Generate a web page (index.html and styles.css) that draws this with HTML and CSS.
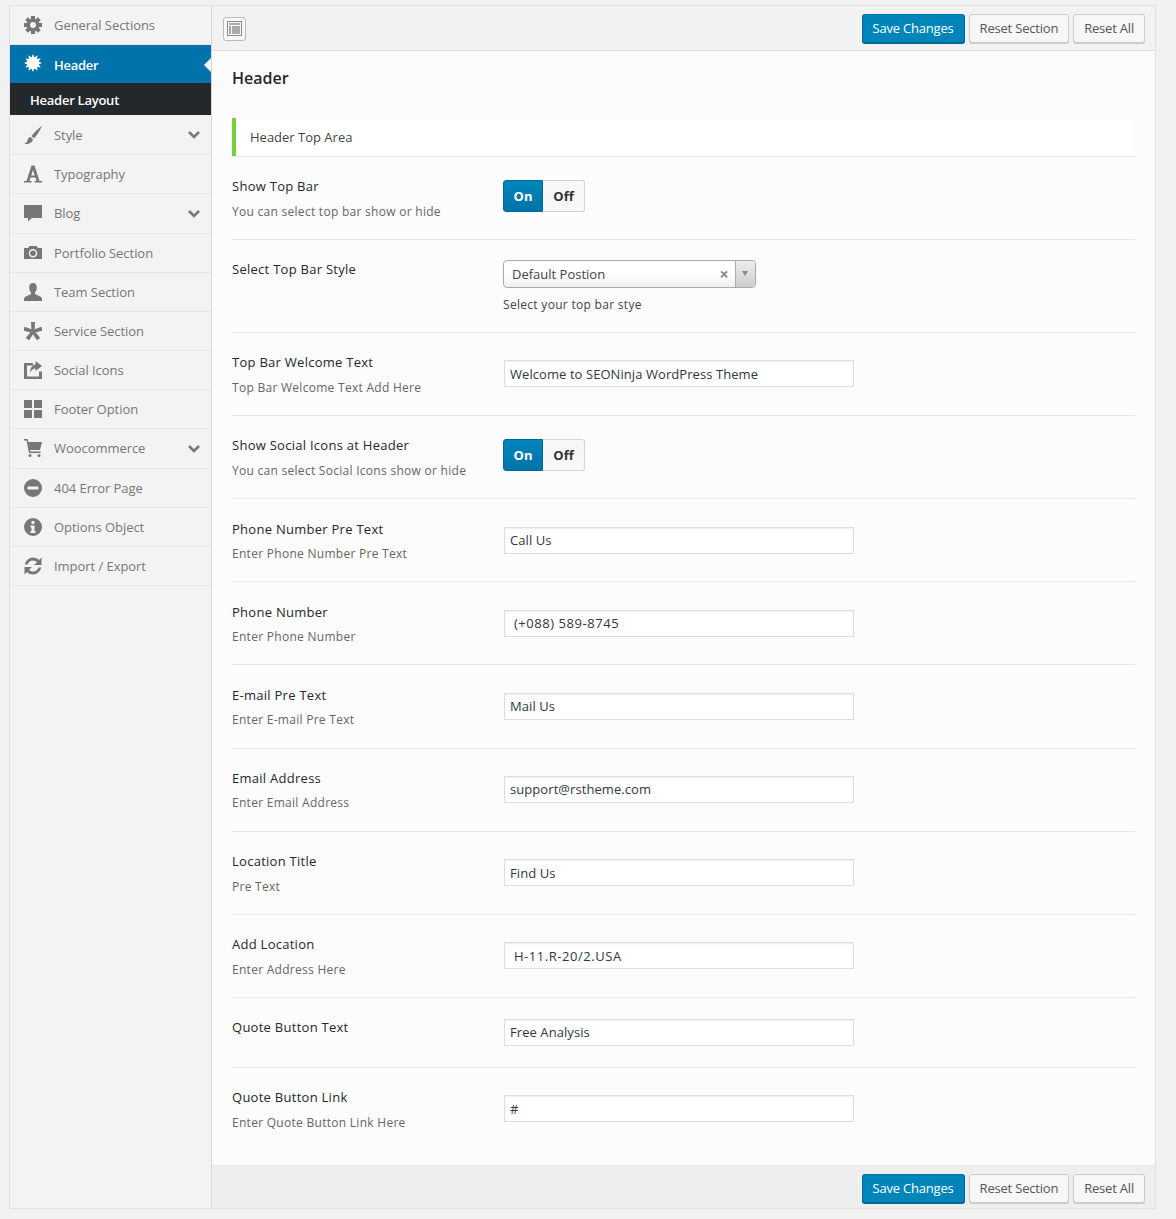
FILE: index.html
```html
<!DOCTYPE html>
<html lang="en">
<head>
  <meta charset="UTF-8">
  <title>Theme Options - Header</title>
  <link rel="stylesheet" href="styles.css">
</head>
<body>

  <div class="panel">
    <div class="sidebar">
      <a class="nav-item">
        <svg class="nav-icon" viewBox="0 0 18 18"><circle cx="9" cy="9" r="4.8" fill="none" stroke="currentColor" stroke-width="3.6"/><g fill="currentColor"><rect x="7" y="0" width="4" height="18"/><rect x="7" y="0" width="4" height="18" transform="rotate(45 9 9)"/><rect x="7" y="0" width="4" height="18" transform="rotate(90 9 9)"/><rect x="7" y="0" width="4" height="18" transform="rotate(135 9 9)"/></g><circle cx="9" cy="9" r="3" fill="#f3f3f3"/></svg>
        General Sections
      </a>
      <a class="nav-item active">
        <svg class="nav-icon" viewBox="0 0 18 18"><path fill="currentColor" d="M18 9L14.600 7.500L16.800 4.500L13.100 4.900L13.500 1.200L10.500 3.400L9 0L7.500 3.400L4.500 1.200L4.900 4.900L1.200 4.500L3.400 7.500L0 9L3.400 10.500L1.200 13.500L4.900 13.100L4.500 16.800L7.500 14.600L9 18L10.500 14.600L13.500 16.800L13.100 13.100L16.800 13.500L14.600 10.500Z"/></svg>
        Header
      </a>
      <a class="nav-sub">Header Layout</a>
      <a class="nav-item">
        <svg class="nav-icon" viewBox="0 0 18 18"><path fill="currentColor" d="M18 0C14 3 10 6.500 7.500 10L10 12.500C13 9.500 16 4 18 0ZM6.500 11C3.500 11.500 4 14 3 15.500C2.500 16.500 1.500 17.500 0 18C4 18.500 8.500 17 9 13.500Z"/></svg>
        Style
        <svg class="chevron" viewBox="0 0 12 8"><path d="M1 1l5 5 5-5" fill="none" stroke="currentColor" stroke-width="2.600"/></svg>
      </a>
      <a class="nav-item">
        <svg class="nav-icon" viewBox="0 0 18 18"><path fill="currentColor" fill-rule="evenodd" d="M7.500 0.500H10.500L15.500 16H18V17.500H10.500V16H12.500L11.500 12.500H6.500L5.500 16H7.500V17.500H0V16H2.500ZM9 5L7.200 10.500H10.800Z"/></svg>
        Typography
      </a>
      <a class="nav-item">
        <svg class="nav-icon" viewBox="0 0 18 18"><path fill="currentColor" d="M0 1H18V14H8L4 17.500V14H0Z"/></svg>
        Blog
        <svg class="chevron" viewBox="0 0 12 8"><path d="M1 1l5 5 5-5" fill="none" stroke="currentColor" stroke-width="2.600"/></svg>
      </a>
      <a class="nav-item">
        <svg class="nav-icon" viewBox="0 0 18 18"><path fill="currentColor" fill-rule="evenodd" d="M0 4H4L5.500 2H12.500L14 4H18V15H0ZM9 5A4.300 4.300 0 1 0 9 13.600A4.300 4.300 0 1 0 9 5Z"/><circle cx="9" cy="9.300" r="2.800" fill="currentColor"/></svg>
        Portfolio Section
      </a>
      <a class="nav-item">
        <svg class="nav-icon" viewBox="0 0 18 18"><path fill="currentColor" d="M9 0C11.500 0 12.800 2 12.800 4.500C12.800 7 11.800 8.500 11 9.500V11C13 12.500 18 13 18 16V18H0V16C0 13 5 12.500 7 11V9.500C6.200 8.500 5.200 7 5.200 4.500C5.200 2 6.500 0 9 0Z"/></svg>
        Team Section
      </a>
      <a class="nav-item">
        <svg class="nav-icon" viewBox="0 0 18 18"><g fill="currentColor"><path d="M7 0H11L10.500 9.500H7.500Z"/><path d="M7 0H11L10.500 9.500H7.500Z" transform="rotate(72 9 9.500)"/><path d="M7 0H11L10.500 9.500H7.500Z" transform="rotate(144 9 9.500)"/><path d="M7 0H11L10.500 9.500H7.500Z" transform="rotate(216 9 9.500)"/><path d="M7 0H11L10.500 9.500H7.500Z" transform="rotate(288 9 9.500)"/></g></svg>
        Service Section
      </a>
      <a class="nav-item">
        <svg class="nav-icon" viewBox="0 0 18 18"><path fill="currentColor" d="M0 2H9V4.500H3V15.500H15V10.500H18V18H0ZM11.500 0L18 5L11.500 10V7.500C9 7.500 7 9 6 12C6 7.500 8 4 11.500 3.500Z"/></svg>
        Social Icons
      </a>
      <a class="nav-item">
        <svg class="nav-icon" viewBox="0 0 18 18"><path fill="currentColor" d="M0 0H8V8H0ZM10 0H18V8H10ZM0 10H8V18H0ZM10 10H18V18H10Z"/></svg>
        Footer Option
      </a>
      <a class="nav-item">
        <svg class="nav-icon" viewBox="0 0 18 18"><path fill="currentColor" d="M0 0H3.500L4.500 3H18L16 11H6L6.500 12.500H16.500V14H5L2.500 1.500H0Z"/><circle cx="6" cy="16.500" r="1.500" fill="currentColor"/><circle cx="15" cy="16.500" r="1.500" fill="currentColor"/></svg>
        Woocommerce
        <svg class="chevron" viewBox="0 0 12 8"><path d="M1 1l5 5 5-5" fill="none" stroke="currentColor" stroke-width="2.600"/></svg>
      </a>
      <a class="nav-item">
        <svg class="nav-icon" viewBox="0 0 18 18"><path fill="currentColor" fill-rule="evenodd" d="M9 0A9 9 0 1 0 9 18A9 9 0 1 0 9 0ZM3.500 7.500H14.500V10.500H3.500Z"/></svg>
        404 Error Page
      </a>
      <a class="nav-item">
        <svg class="nav-icon" viewBox="0 0 18 18"><path fill="currentColor" fill-rule="evenodd" d="M9 0A9 9 0 1 0 9 18A9 9 0 1 0 9 0ZM7.500 3H10.500V6H7.500ZM6.500 7.500H10.500V13H11.500V15H6.500V13H7.500V9.500H6.500Z"/></svg>
        Options Object
      </a>
      <a class="nav-item">
        <svg class="nav-icon" viewBox="0 0 18 18"><path fill="currentColor" d="M9 0.500C11.500 0.500 13.500 1.500 15 3L17.500 0.500V8H10L13 5.200C12 4.200 10.500 3.400 9 3.400C6.500 3.400 4.500 5 3.500 7.500H0.800C1.800 3.500 5 0.500 9 0.500ZM0.500 10H8L5 12.800C6 13.800 7.500 14.600 9 14.600C11.500 14.600 13.500 13 14.500 10.500H17.200C16.200 14.500 13 17.500 9 17.500C6.500 17.500 4.500 16.500 3 15L0.500 17.500Z"/></svg>
        Import / Export
      </a>
    </div>

    <div class="main">
      <div class="bar bar-top">
        <span class="expand-btn">
          <svg viewBox="0 0 15 15" width="15" height="15"><rect x="0.500" y="0.500" width="14" height="14" fill="none" stroke="#8a8a8a"/><rect x="2" y="2" width="11" height="2" fill="#aaa"/><rect x="2" y="5" width="2" height="8" fill="#aaa"/><rect x="5" y="5" width="8" height="8" fill="#aaa"/></svg>
        </span>
        <div class="bar-actions">
          <button class="btn btn-primary">Save Changes</button>
          <button class="btn">Reset Section</button>
          <button class="btn">Reset All</button>
        </div>
      </div>

      <div class="content">
        <h2 class="page-title">Header</h2>
        <div class="section-head">Header Top Area</div>

        <div class="row">
          <div class="row-label"><div class="label">Show Top Bar</div><div class="desc">You can select top bar show or hide</div></div>
          <div class="cell-switch"><div class="switch"><span class="switch-on">On</span><span class="switch-off">Off</span></div></div>
        </div>

        <div class="row">
          <div class="row-label"><div class="label">Select Top Bar Style</div></div>
          <div class="cell-select">
            <div class="select">
              <span class="select-text">Default Postion</span>
              <span class="select-clear">×</span>
              <span class="select-arrow"></span>
            </div>
            <div class="select-note">Select your top bar stye</div>
          </div>
        </div>

        <div class="row">
          <div class="row-label"><div class="label">Top Bar Welcome Text</div><div class="desc">Top Bar Welcome Text Add Here</div></div>
          <div class="cell-input"><input class="text-input" value="Welcome to SEONinja WordPress Theme"></div>
        </div>

        <div class="row">
          <div class="row-label"><div class="label">Show Social Icons at Header</div><div class="desc">You can select Social Icons show or hide</div></div>
          <div class="cell-switch"><div class="switch"><span class="switch-on">On</span><span class="switch-off">Off</span></div></div>
        </div>

        <div class="row">
          <div class="row-label"><div class="label">Phone Number Pre Text</div><div class="desc">Enter Phone Number Pre Text</div></div>
          <div class="cell-input"><input class="text-input" value="Call Us"></div>
        </div>

        <div class="row">
          <div class="row-label"><div class="label">Phone Number</div><div class="desc">Enter Phone Number</div></div>
          <div class="cell-input"><input class="text-input input-num" value=" (+088) 589-8745"></div>
        </div>

        <div class="row">
          <div class="row-label"><div class="label">E-mail Pre Text</div><div class="desc">Enter E-mail Pre Text</div></div>
          <div class="cell-input"><input class="text-input" value="Mail Us"></div>
        </div>

        <div class="row">
          <div class="row-label"><div class="label">Email Address</div><div class="desc">Enter Email Address</div></div>
          <div class="cell-input"><input class="text-input" value="support@rstheme.com"></div>
        </div>

        <div class="row">
          <div class="row-label"><div class="label">Location Title</div><div class="desc">Pre Text</div></div>
          <div class="cell-input"><input class="text-input" value="Find Us"></div>
        </div>

        <div class="row">
          <div class="row-label"><div class="label">Add Location</div><div class="desc">Enter Address Here</div></div>
          <div class="cell-input"><input class="text-input input-num" value=" H-11.R-20/2.USA"></div>
        </div>

        <div class="row row-short">
          <div class="row-label"><div class="label">Quote Button Text</div></div>
          <div class="cell-input"><input class="text-input" value="Free Analysis"></div>
        </div>

        <div class="row row-last">
          <div class="row-label"><div class="label">Quote Button Link</div><div class="desc">Enter Quote Button Link Here</div></div>
          <div class="cell-input"><input class="text-input" value="#"></div>
        </div>
      </div>

      <div class="bar bar-bottom">
        <div class="bar-actions">
          <button class="btn btn-primary">Save Changes</button>
          <button class="btn">Reset Section</button>
          <button class="btn">Reset All</button>
        </div>
      </div>
    </div>
  </div>

</body>
</html>
```

FILE: styles.css
```css
body {
  margin: 0;
  background: #f1f1f1;
  font-family: "Open Sans", sans-serif;
  font-size: 13px;
  color: #444;
}
.panel {
  display: flex;
  width: 1147px;
  height: 1204px;
  box-sizing: border-box;
  margin: 5px 0 0 9px;
  border: 1px solid #e1e1e1;
  background: #f3f3f3;
}
.sidebar {
  width: 202px;
  flex: none;
  box-sizing: border-box;
  border-right: 1px solid #d8d8d8;
}
.nav-item {
  position: relative;
  display: flex;
  align-items: center;
  gap: 12px;
  height: 39.18px;
  box-sizing: border-box;
  padding-left: 14px;
  border-bottom: 1px solid #e7e7e7;
  color: #777;
  letter-spacing: -0.05px;
}
.nav-icon {
  width: 18px;
  height: 18px;
  flex: none;
}
.nav-item .chevron {
  position: absolute;
  left: 178px;
  top: 16px;
  width: 12px;
  height: 8px;
}
.nav-item.active {
  height: 38px;
  padding-top: 2px;
  background: #0073aa;
  border-bottom: none;
  color: #fff;
  font-weight: 600;
  letter-spacing: -0.3px;
}
.nav-item.active .nav-icon {
  margin-top: -4px;
}
.nav-item.active::after {
  content: "";
  position: absolute;
  right: 0;
  top: 13px;
  border: 7px solid transparent;
  border-left: none;
  border-right-color: #fcfcfc;
}
.nav-sub {
  display: block;
  height: 32px;
  padding-left: 20px;
  background: #23282d;
  color: #fff;
  font-weight: 600;
  line-height: 34px;
  letter-spacing: -0.25px;
}
.nav-sub + .nav-item {
  height: 40px;
}
.main {
  flex: 1;
  display: flex;
  flex-direction: column;
  background: #fcfcfc;
}
.bar {
  display: flex;
  justify-content: space-between;
  flex: none;
  box-sizing: border-box;
  padding: 0 10px 0 11px;
}
.bar-top {
  align-items: center;
  height: 45px;
  padding-top: 1px;
  background: #f2f2f2;
  border-bottom: 1px solid #dedede;
}
.bar-bottom {
  align-items: flex-start;
  height: 43px;
  padding-top: 8px;
  justify-content: flex-end;
  background: #eee;
  border-top: 1px solid #e8e8e8;
}
.expand-btn {
  display: flex;
  align-items: center;
  justify-content: center;
  width: 21px;
  height: 22px;
  border: 1px solid #bbb;
  border-radius: 3px;
  background: #f7f7f7;
}
.bar-actions {
  display: flex;
  gap: 4px;
}
.btn {
  height: 29px;
  box-sizing: border-box;
  padding: 0 10px 2px;
  border: 1px solid #ccc;
  border-radius: 3px;
  background: #f7f7f7;
  box-shadow: 0 1px 0 #ccc;
  color: #555;
  font-family: "Open Sans", sans-serif;
  font-size: 13px;
  letter-spacing: -0.2px;
}
.btn-primary {
  background: #0085ba;
  border-color: #0073aa #006799 #006799;
  box-shadow: 0 1px 0 #006799;
  color: #fff;
}
.content {
  flex: 1;
  padding: 0 20px;
}
.page-title {
  margin: 0;
  padding-top: 15px;
  height: 52px;
  color: #23282d;
  font-size: 16px;
  font-weight: 600;
  line-height: 24px;
}
.section-head {
  height: 38px;
  padding-left: 14px;
  border-left: 4px solid #7ad03a;
  background: #fff;
  box-shadow: 0 1px 1px rgba(0, 0, 0, 0.07);
  color: #444;
  line-height: 39px;
}
.section-head + .row {
  margin-top: 0.75px;
}
.row {
  display: grid;
  grid-template-columns: 271px 1fr;
  border-bottom: 1px solid #e8e8e8;
}
.row-label {
  padding: 19.4px 0 17.15px;
}
.label {
  color: #23282d;
  font-size: 13px;
  line-height: 20px;
  letter-spacing: 0.27px;
}
.desc {
  margin-top: 5.6px;
  color: #666;
  font-size: 12px;
  line-height: 20px;
  letter-spacing: 0.28px;
}
.row-short .row-label {
  padding-bottom: 0;
}
.row-short .cell-input {
  padding: 21px 0;
}
.row-last {
  border-bottom: none;
}
.cell-input {
  padding-top: 27.45px;
}
.cell-switch {
  padding-top: 23px;
}
.cell-select {
  padding: 20px 0 19px;
}
.text-input {
  display: block;
  width: 350px;
  height: 27px;
  box-sizing: border-box;
  margin: 0 0 0 1px;
  padding: 0 5px;
  border: 1px solid #ddd;
  background: #fff;
  box-shadow: inset 0 1px 2px rgba(0, 0, 0, 0.07);
  color: #32373c;
  font-family: "Open Sans", sans-serif;
  font-size: 13px;
  letter-spacing: 0.07px;
}
.input-num {
  letter-spacing: 0.55px;
}
.switch {
  display: flex;
  width: 82px;
  height: 32px;
  font-size: 13px;
  font-weight: 700;
  line-height: 30px;
  text-align: center;
}
.switch-on {
  width: 40px;
  box-sizing: border-box;
  border: 1px solid #006799;
  border-radius: 3px 0 0 3px;
  background: linear-gradient(#0085ba, #0073aa);
  color: #fff;
}
.switch-off {
  width: 42px;
  box-sizing: border-box;
  border: 1px solid #d5d5d5;
  border-left: none;
  border-radius: 0 3px 3px 0;
  background: #f7f7f7;
  color: #333;
}
.select {
  display: flex;
  align-items: center;
  width: 253px;
  height: 28px;
  box-sizing: border-box;
  border: 1px solid #aaa;
  border-radius: 4px;
  background: linear-gradient(#fff 50%, #eee);
  color: #444;
}
.select-text {
  flex: 1;
  padding-left: 8px;
}
.select-clear {
  width: 22px;
  color: #888;
  font-size: 16px;
  font-weight: 700;
  text-align: center;
}
.select-arrow {
  position: relative;
  width: 19px;
  height: 26px;
  border-left: 1px solid #aaa;
  border-radius: 0 4px 4px 0;
  background: linear-gradient(#eee, #ccc);
}
.select-arrow::after {
  content: "";
  position: absolute;
  left: 6px;
  top: 10px;
  border: 3px solid transparent;
  border-top: 5px solid #888;
  border-bottom: none;
}
.select-note {
  margin-top: 9px;
  color: #444;
  font-size: 12px;
  line-height: 16px;
  letter-spacing: 0.3px;
}
```
